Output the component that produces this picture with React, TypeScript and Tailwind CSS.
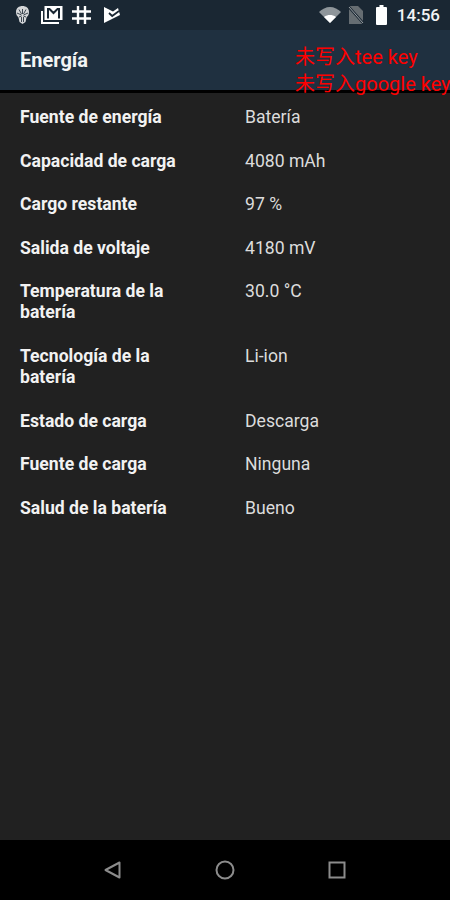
import { Fragment } from "react";

const rows = [
  ["Fuente de energía", "Batería"],
  ["Capacidad de carga", "4080 mAh"],
  ["Cargo restante", "97 %"],
  ["Salida de voltaje", "4180 mV"],
  ["Temperatura de la batería", "30.0 °C"],
  ["Tecnología de la batería", "Li-ion"],
  ["Estado de carga", "Descarga"],
  ["Fuente de carga", "Ninguna"],
  ["Salud de la batería", "Bueno"],
];

function StatusLeft() {
  return (
    <div className="flex items-center">
      <svg width="13" height="18" viewBox="0 0 13 18" className="ml-[16px]">
        <path d="M6.500 0C10 0 13 2 13 6c0 2.500-1 4-2.500 5.500L9.500 16l-3 2-3-2-1-4.500C1 10 0 8.500 0 6c0-4 3-6 6.500-6z" fill="#d4d6d8" />
        <path d="M6.500 3v5M3 3.500l2.500 4.500M10 3.500L7.500 8M1 7l4.500 2M12 7L7.500 9M3 11l2.500-1M10 11l-2.500-1M5.500 11v5M7.500 11v5" stroke="#2a3641" strokeWidth="0.9" />
      </svg>
      <svg width="22" height="18" viewBox="0 0 22 18" className="ml-[12px]">
        <path d="M1 5v12h17" fill="none" stroke="#fff" strokeWidth="2" />
        <rect x="3.500" y="0" width="18" height="14" fill="#fff" />
        <path d="M7 12.500V3h1.500l4 4 4-4H18v9.500" fill="none" stroke="#1a2733" strokeWidth="2" />
      </svg>
      <svg width="19" height="18" viewBox="0 0 19 18" className="ml-[9px]">
        <path d="M6 0v18M13 0v18M0 5.500h19M0 12.500h19" stroke="#fff" strokeWidth="2.400" />
      </svg>
      <svg width="16" height="16" viewBox="0 0 16 16" className="ml-[13px]">
        <path d="M0 0l9 4.500L14 1l2 7-16 8z" fill="#fff" />
        <path d="M5 6l3.200 3L15 4" fill="none" stroke="#1a2733" strokeWidth="1.800" />
      </svg>
    </div>
  );
}

function StatusRight() {
  return (
    <div className="flex items-center">
      <svg width="22" height="16" viewBox="0 0 22 16">
        <path d="M0 5C3 2 7 0 11 0s8 2 11 5L11 16z" fill="#8f969b" />
        <path d="M5 10c2-1.500 4-2 6-2s4 .5 6 2l-6 6z" fill="#fff" />
      </svg>
      <svg width="16" height="18" viewBox="0 0 16 18" className="ml-[7px]">
        <path d="M1 0h9l5 5v13H1z" fill="#666d72" />
        <path d="M0 0l16 18" stroke="#1a2733" strokeWidth="2.500" />
        <path d="M1 1l14 16" stroke="#9aa0a4" strokeWidth="1" />
      </svg>
      <svg width="11" height="20" viewBox="0 0 11 20" className="ml-[12px]">
        <path d="M3.500 0h4v2H10a1 1 0 0 1 1 1v16a1 1 0 0 1-1 1H1a1 1 0 0 1-1-1V3a1 1 0 0 1 1-1h2.500z" fill="#fff" />
      </svg>
      <span className="ml-[10px] mr-[10px] text-[17px] leading-[30px] font-medium text-[#f2f4f5]">14:56</span>
    </div>
  );
}

export default function App() {
  return (
    <div
      className="h-[900px] w-[450px] flex flex-col overflow-hidden bg-[#212121]"
      style={{ fontFamily: "Roboto, 'Noto Sans CJK SC', sans-serif" }}
    >
      <div className="h-[30px] shrink-0 flex items-center justify-between bg-[#1a2733]">
        <StatusLeft />
        <StatusRight />
      </div>
      <div className="relative h-[60px] shrink-0 flex items-center bg-[#1f3040] px-5 pb-[1px]">
        <span className="text-[20px] font-bold text-[#f2f4f5]">Energía</span>
        <div className="absolute left-[295px] top-[14px] whitespace-nowrap text-[20px] leading-[27px] text-[#ff0000]">
          <div>未写入tee key</div>
          <div>未写入google key</div>
        </div>
      </div>
      <div className="h-[3px] shrink-0 bg-black" />
      <div className="flex-1 px-5 pt-[14px]">
        <div className="grid grid-cols-[225px_1fr] gap-y-[22.600px] text-[17.600px] leading-[21px]">
          {rows.map(([label, value]) => (
            <Fragment key={label}>
              <div className="pr-[40px] font-bold text-[#f2f2f2]">{label}</div>
              <div className="text-[#dcdcdc]">{value}</div>
            </Fragment>
          ))}
        </div>
      </div>
      <div className="h-[60px] shrink-0 flex items-center justify-center gap-[88px] bg-black">
        <svg width="24" height="24" viewBox="0 0 24 24">
          <path d="M18.500 4.500v15L4.500 12z" fill="none" stroke="#8c8c8c" strokeWidth="2" strokeLinejoin="round" />
        </svg>
        <svg width="24" height="24" viewBox="0 0 24 24">
          <circle cx="12" cy="12" r="8.500" fill="none" stroke="#8c8c8c" strokeWidth="2" />
        </svg>
        <svg width="24" height="24" viewBox="0 0 24 24">
          <rect x="4.500" y="4.500" width="15" height="15" fill="none" stroke="#8c8c8c" strokeWidth="2" />
        </svg>
      </div>
    </div>
  );
}
